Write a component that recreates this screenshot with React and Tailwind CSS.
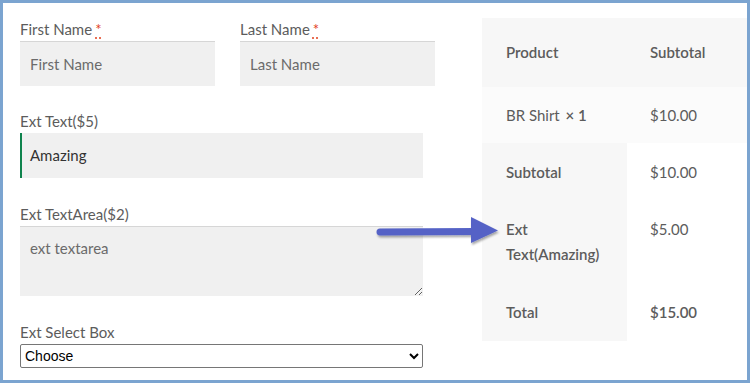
import React from "react";

const font = { fontFamily: "Lato, 'Liberation Sans', sans-serif" };

function Req() {
  return (
    <abbr
      className="ml-[3px] text-[#e2401c] no-underline"
      style={{ textDecoration: "underline dotted #e2401c", textUnderlineOffset: "3px" }}
      title="required"
    >
      *
    </abbr>
  );
}

export default function App() {
  return (
    <div
      className="relative w-[750px] h-[383px] border-[3px] border-[#7ba4d0] bg-white flex overflow-hidden box-border"
      style={font}
    >
      {/* form */}
      <div className="w-[432px] pl-[17px] pt-[15px] flex flex-col text-[15px] text-[#5c5c5c]">
        <div className="flex gap-[25px]">
          <div className="w-[195px] flex flex-col">
            <div className="h-[23px] leading-[23px]">
              First Name<Req />
            </div>
            <div className="h-[45px] bg-[#f0f0f0] border-t border-[#d6d6d6] pl-[10px] flex items-center text-[#6b6b6b]">
              First Name
            </div>
          </div>
          <div className="w-[195px] flex flex-col">
            <div className="h-[23px] leading-[23px]">
              Last Name<Req />
            </div>
            <div className="h-[45px] bg-[#f0f0f0] border-t border-[#d6d6d6] pl-[10px] flex items-center text-[#6b6b6b]">
              Last Name
            </div>
          </div>
        </div>

        <div className="mt-[24px] h-[23px] leading-[23px]">Ext Text($5)</div>
        <div className="w-[403px] h-[45px] bg-[#f0f0f0] border-l-2 border-[#0f834d] pl-[8px] flex items-center text-[#333333]">
          Amazing
        </div>

        <div className="mt-[25px] h-[23px] leading-[23px]">Ext TextArea($2)</div>
        <textarea
          className="w-[403px] h-[70px] bg-[#f0f0f0] border-t border-[#d6d6d6] px-[10px] pt-[10px] text-[15px] text-[#6b6b6b] outline-none"
          defaultValue="ext textarea"
        />

        <div className="mt-[25px] h-[23px] leading-[23px]">Ext Select Box</div>
        <select
          className="w-[403px] h-[24px] border border-[#767676] rounded-[2px] bg-white text-[14px] text-black pl-0"
          style={{ fontFamily: "'Liberation Sans', Arial, sans-serif" }}
          defaultValue="choose"
        >
          <option value="choose">Choose</option>
        </select>
      </div>

      {/* table */}
      <div className="ml-[47px] mt-[15px] w-[265px] self-start text-[15px] text-[#5c5c5c]">
        <div className="flex h-[69px] items-center bg-[#f7f7f7] font-semibold">
          <div className="w-[145px] pl-[24px]">Product</div>
          <div className="pl-[23px]">Subtotal</div>
        </div>
        <div className="flex h-[56px] items-center bg-[#fbfbfb]">
          <div className="w-[145px] pl-[24px]">
            BR Shirt <span className="font-semibold ml-[2px]">× 1</span>
          </div>
          <div className="pl-[23px]">$10.00</div>
        </div>
        <div className="flex leading-[25px]">
          <div className="w-[145px] bg-[#f7f7f7] pl-[24px] pt-[17px] pb-[16px] font-semibold">Subtotal</div>
          <div className="pl-[23px] pt-[17px] pb-[16px]">$10.00</div>
        </div>
        <div className="flex leading-[25px]">
          <div className="w-[145px] bg-[#f7f7f7] pl-[24px] pr-[10px] py-[16px] font-semibold">
            Ext
            <br />
            Text(Amazing)
          </div>
          <div className="pl-[23px] py-[16px]">$5.00</div>
        </div>
        <div className="flex leading-[25px]">
          <div className="w-[145px] bg-[#f7f7f7] pl-[24px] pt-[17px] pb-[16px] font-semibold">Total</div>
          <div className="pl-[23px] pt-[17px] pb-[16px] font-semibold">$15.00</div>
        </div>
      </div>

      {/* arrow annotation */}
      <svg
        className="absolute left-[367px] top-[209px]"
        width="135"
        height="40"
        viewBox="0 0 135 40"
      >
        <defs>
          <filter id="sh" x="-10%" y="-30%" width="120%" height="160%">
            <feDropShadow dx="1" dy="2" stdDeviation="1.2" floodColor="#000" floodOpacity="0.35" />
          </filter>
        </defs>
        <g filter="url(#sh)">
          <line x1="10" y1="20" x2="106" y2="19.5" stroke="#5462c6" strokeWidth="7" strokeLinecap="round" />
          <polygon points="101,5 128,18.5 101,31" fill="#5462c6" />
        </g>
      </svg>
    </div>
  );
}
